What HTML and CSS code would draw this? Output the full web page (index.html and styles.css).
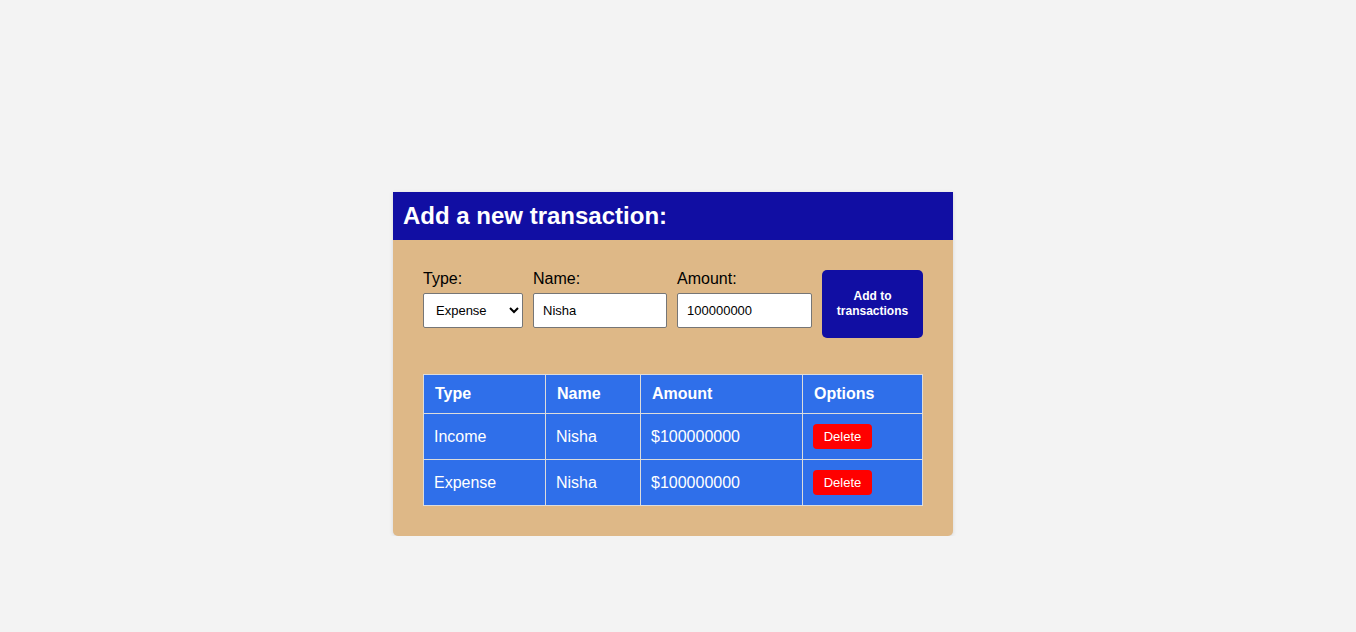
FILE: index.html
```html
<!DOCTYPE html>
<html lang="en">
<head>
<meta charset="utf-8">
<title>Transactions</title>
<link rel="stylesheet" href="styles.css">
</head>
<body>
<div class="page">
  <div class="card">
    <h1 class="card-title">Add a new transaction:</h1>
    <div class="card-body">
      <form class="tx-form">
        <div class="field">
          <label class="field-label" for="type">Type:</label>
          <select id="type" class="control control-select">
            <option>Income</option>
            <option selected>Expense</option>
          </select>
        </div>
        <div class="field">
          <label class="field-label" for="name">Name:</label>
          <input id="name" class="control control-name" type="text" value="Nisha">
        </div>
        <div class="field">
          <label class="field-label" for="amount">Amount:</label>
          <input id="amount" class="control control-amount" type="number" value="100000000">
        </div>
        <button type="button" class="add-btn">Add to transactions</button>
      </form>
      <table class="tx-table">
        <thead>
          <tr><th class="col-type">Type</th><th class="col-name">Name</th><th class="col-amount">Amount</th><th class="col-opt">Options</th></tr>
        </thead>
        <tbody>
          <tr><td>Income</td><td>Nisha</td><td>$100000000</td><td><button type="button" class="del-btn">Delete</button></td></tr>
          <tr><td>Expense</td><td>Nisha</td><td>$100000000</td><td><button type="button" class="del-btn">Delete</button></td></tr>
        </tbody>
      </table>
    </div>
  </div>
</div>
</body>
</html>
```
FILE: styles.css
```css
html, body {
  margin: 0;
  padding: 0;
  background: #f3f3f3;
  font-family: "Liberation Sans", Arial, sans-serif;
}
.page {
  display: flex;
  justify-content: center;
  padding: 192px 10px 0 0;
}
.card {
  width: 560px;
  background: #deb887;
  border-radius: 0 0 5px 5px;
  box-shadow: 0 1px 4px rgba(0,0,0,0.12);
}
.card-title {
  margin: 0;
  height: 48px;
  box-sizing: border-box;
  padding: 0 10px;
  display: flex;
  align-items: center;
  background: #110ea3;
  color: #fff;
  font-size: 24px;
  font-weight: bold;
}
.card-body {
  padding: 30px;
}
.tx-form {
  display: flex;
  align-items: flex-start;
  gap: 10px;
  margin: 0 0 36px 0;
}
.field {
  display: flex;
  flex-direction: column;
}
.field-label {
  font-size: 16px;
  line-height: 18px;
  color: #000;
  margin-bottom: 5px;
}
.control {
  box-sizing: border-box;
  height: 35px;
  border: 1px solid #767676;
  border-radius: 2px;
  background: #fff;
  font-family: "Liberation Sans", Arial, sans-serif;
  font-size: 13px;
  color: #000;
  padding: 0 9px;
}
.control-select {
  width: 100px;
  padding: 0 4px 0 8px;
}
.control-name {
  width: 134px;
}
.control-amount {
  width: 135px;
  -moz-appearance: textfield;
}
.control-amount::-webkit-inner-spin-button,
.control-amount::-webkit-outer-spin-button {
  -webkit-appearance: none;
  margin: 0;
}
.add-btn {
  width: 101px;
  height: 68px;
  border: none;
  border-radius: 5px;
  background: #110ea3;
  color: #fff;
  font-family: "Liberation Sans", Arial, sans-serif;
  font-size: 12px;
  font-weight: bold;
  line-height: 15px;
  padding: 0 10px;
}
.tx-table {
  width: 500px;
  border-collapse: collapse;
  background: #2f6fea;
  color: #fff;
  font-size: 16px;
}
.tx-table th,
.tx-table td {
  border: 1px solid #dcdcdc;
  text-align: left;
  padding: 0 10px;
}
.tx-table th {
  height: 38px;
  font-weight: bold;
  padding-left: 11px;
}
.tx-table td {
  height: 45px;
}
.col-type { width: 100px; }
.col-name { width: 73px; }
.col-amount { width: 140px; }
.del-btn {
  border: none;
  border-radius: 4px;
  background: #ff0000;
  color: #fff;
  font-family: "Liberation Sans", Arial, sans-serif;
  font-size: 13px;
  padding: 0 10px;
  height: 25px;
  width: 59px;
}
```
